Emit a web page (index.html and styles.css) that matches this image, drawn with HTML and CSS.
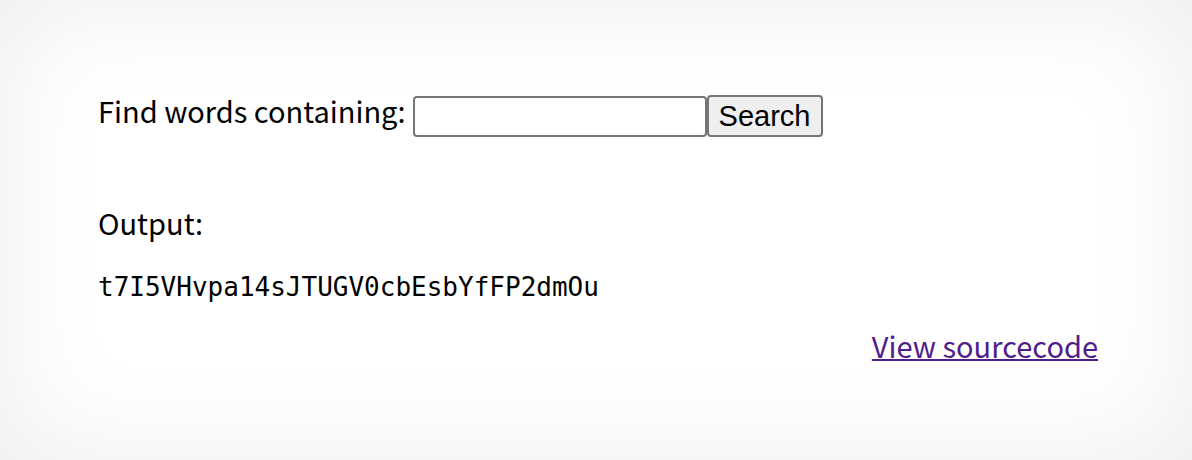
FILE: index.html
```html
<!DOCTYPE html>
<html>
<head>
<meta charset="utf-8">
<link rel="stylesheet" href="styles.css">
</head>
<body>
<div class="page">
  <div class="container">
    <form class="search-form">
      <label class="label" for="q">Find words containing:</label>
      <input class="text-input" id="q" type="text"><button class="btn" type="button">Search</button>
    </form>
    <div class="output-label">Output:</div>
    <pre class="output">t7I5VHvpa14sJTUGV0cbEsbYfFP2dmOu</pre>
    <div class="footer"><a class="source-link" href="#">View sourcecode</a></div>
  </div>
</div>
</body>
</html>
```

FILE: styles.css
```css
html, body {
  margin: 0;
  padding: 0;
  height: 100%;
}
body {
  font-family: "Noto Sans CJK KR", "Open Sans", sans-serif;
  font-size: 29px;
  line-height: 42px;
  color: #000;
  background: #fff;
}
.page {
  min-height: 100%;
  box-sizing: border-box;
  box-shadow: inset 0 0 120px rgba(0, 0, 0, 0.07);
  padding: 95px 0 0 4px;
}
.container {
  width: 1000px;
  margin: 0 auto;
}
.search-form {
  display: flex;
  align-items: center;
  margin: 0;
}
.label {
  align-self: flex-start;
  line-height: 30px;
  margin-right: 7px;
}
.text-input {
  width: 294px;
  height: 41px;
  box-sizing: border-box;
  border: 2px solid #767676;
  border-radius: 4px;
  font-size: 24px;
  padding: 0 4px;
  margin: 0;
}
.btn {
  height: 42px;
  width: 116px;
  box-sizing: border-box;
  font-family: "Liberation Sans", Arial, sans-serif;
  font-size: 29px;
  line-height: 34px;
  background: #efefef;
  border: 2px solid #767676;
  border-radius: 4px;
  margin: 0;
  padding: 0;
  color: #000;
}
.output-label {
  margin-top: 64px;
}
.output {
  font-family: "DejaVu Sans Mono", monospace;
  font-size: 26px;
  line-height: 30px;
  margin: 29px 0 0;
}
.footer {
  display: flex;
  justify-content: flex-end;
  margin-top: 22px;
}
.source-link {
  color: #4f1d8c;
  text-decoration-thickness: 2px;
}
```
